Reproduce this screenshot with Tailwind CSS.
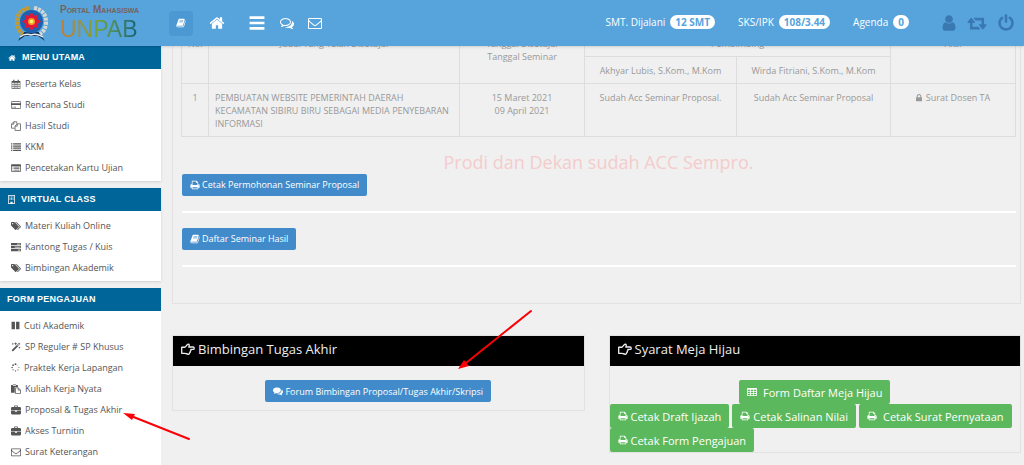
<!DOCTYPE html>
<html lang="id">
<head>
<meta charset="utf-8">
<title>Portal Mahasiswa UNPAB</title>
<script src="https://cdn.jsdelivr.net/npm/@tailwindcss/browser@4"></script>
</head>
<body class="relative h-screen overflow-hidden bg-[#f0f0f0] font-['Open_Sans','Noto_Sans',sans-serif] text-[9px] leading-[13px] text-[#555]">
<svg class="hidden" aria-hidden="true">
  <symbol id="home" viewBox="0 0 1792 1792"><path d="M1472 992v480q0 26-19 45t-45 19h-384v-384h-256v384h-384q-26 0-45-19t-19-45v-480q0-1 .5-3t.5-3l575-474 575 474q1 2 1 6zm223-69l-62 74q-8 9-21 11h-3q-13 0-21-7l-692-577-692 577q-12 8-24 7-13-2-21-11l-62-74q-8-10-7-23.5t11-21.5l719-599q32-26 76-26t76 26l244 204v-195q0-14 9-23t23-9h192q14 0 23 9t9 23v408l219 182q10 8 11 21.5t-7 23.5z"/></symbol>
  <symbol id="bars" viewBox="0 0 14 14"><path d="M.5 1.2h13v2.4H.5zM.5 5.8h13v2.4H.5zM.5 10.4h13v2.4H.5z"/></symbol>
  <symbol id="comments" viewBox="0 0 1792 1792"><path d="M1408 768q0 139-94 257t-256.500 186.500-353.500 68.500q-86 0-176-16-124 88-278 128-36 9-86 16h-3q-11 0-20.500-8t-11.500-21q-1-3-1-6.500t.5-6.500 2-6l2.500-5 3.500-5.500 4-5 4.500-5 4-4.500q5-6 23-25t26-29.500 22.500-29 25-38.500 20.500-44q-124-72-195-177t-71-224q0-139 94-257t256.500-186.500 353.500-68.500 353.500 68.500 256.500 186.500 94 257zm384 256q0 120-71 224.500t-195 176.500q10 24 20.500 44t25 38.500 22.500 29 26 29.500 23 25q1 1 4 4.500t4.500 5 4 5 3.500 5.500l2.500 5 2 6 .5 6.500-1 6.500q-3 14-13 22t-22 7q-50-7-86-16-154-40-278-128-90 16-176 16-271 0-472-132 58 4 88 4 161 0 309-45t264-129q125-92 192-212t67-254q0-77-23-152 129 71 204 178t75 230z"/></symbol>
  <symbol id="comments-o" viewBox="0 0 1792 1792"><path d="M704 384q-153 0-286 52t-211.500 141-78.500 191q0 82 53 158t149 132l97 56-35 84q34-20 62-39l44-31 53 10q78 14 153 14 153 0 286-52t211.500-141 78.500-191-78.500-191-211.500-141-286-52zm0-128q191 0 353.500 68.500t256.500 186.500 94 257-94 257-256.500 186.500-353.500 68.500q-86 0-176-16-124 88-278 128-36 9-86 16h-3q-11 0-20.500-8t-11.500-21q-1-3-1-6.500t.5-6.500 2-6l2.500-5 3.500-5.500 4-5 4.500-5 4-4.500q5-6 23-25t26-29.500 22.500-29 25-38.500 20.500-44q-124-72-195-177t-71-224q0-139 94-257t256.500-186.500 353.500-68.500zm822 1169q10 24 20.500 44t25 38.500 22.500 29 26 29.500 23 25q1 1 4 4.500t4.500 5 4 5 3.500 5.500l2.500 5 2 6 .5 6.500-1 6.500q-3 14-13 22t-22 7q-50-7-86-16-154-40-278-128-90 16-176 16-271 0-472-132 58 4 88 4 161 0 309-45t264-129q125-92 192-212t67-254q0-77-23-152 129 71 204 178t75 230q0 120-71 224.500t-195 176.500z"/></symbol>
  <symbol id="envelope" viewBox="0 0 1792 1792"><path d="M1664 1504v-768q-32 36-69 66-268 206-426 338-51 43-83 67t-86.500 48.500-102.500 24.500h-2q-48 0-102.500-24.500t-86.500-48.500-83-67q-158-132-426-338-37-30-69-66v768q0 13 9.500 22.500t22.500 9.500h1472q13 0 22.500-9.500t9.500-22.500zm0-1051v-24.500l-.5-13-3-12.500-5.500-9-9-7.500-14-2.500h-1472q-13 0-22.500 9.500t-9.500 22.500q0 168 147 284 193 152 401 317 6 5 35 29.500t46 37.500 44.500 31.500 50.500 27.500 43 9h2q20 0 43-9t50.500-27.500 44.500-31.500 46-37.500 35-29.500q208-165 401-317 54-43 100.500-115.500t46.500-131.500zm128-37v1088q0 66-47 113t-113 47h-1472q-66 0-113-47t-47-113v-1088q0-66 47-113t113-47h1472q66 0 113 47t47 113z"/></symbol>
  <symbol id="user" viewBox="128 0 1536 1792"><path d="M1536 1399q0 109-62.500 187t-150.500 78h-854q-88 0-150.500-78t-62.500-187q0-85 8.500-160.500t31.500-152 58.500-131 94-89 134.500-34.500q131 128 313 128t313-128q76 0 134.500 34.500t94 89 58.500 131 31.500 152 8.500 160.500zm-256-887q0 159-112.500 271.500t-271.500 112.500-271.500-112.500-112.500-271.500 112.500-271.500 271.500-112.500 271.500 112.500 112.500 271.500z"/></symbol>
  <symbol id="retweet" viewBox="0 0 1920 1792"><path d="M1280 1504q0 13-9.500 22.500t-22.500 9.500h-960q-8 0-13.500-2t-9-7-5.500-8-3-11.500-1-11.500v-600h-192q-26 0-45-19t-19-45q0-24 15-41l320-384q19-22 49-22t49 22l320 384q15 17 15 41 0 26-19 45t-45 19h-192v384h576q16 0 25 11l160 192q7 10 7 21zm640-416q0 24-15 41l-320 384q-20 23-49 23t-49-23l-320-384q-15-17-15-41 0-26 19-45t45-19h192v-384h-576q-16 0-25-12l-160-192q-7-9-7-20 0-13 9.500-22.500t22.500-9.500h960q8 0 13.500 2t9 7 5.500 8 3 11.500 1 11.500v600h192q26 0 45 19t19 45z"/></symbol>
  <symbol id="power" viewBox="0 0 1792 1792"><path d="M1664 896q0 156-61 298t-164 245-245 164-298 61-298-61-245-164-164-245-61-298q0-182 80.500-343t226.500-270q43-32 95.500-25t83.500 50q32 42 24.500 94.500t-49.500 84.500q-98 74-151.500 181t-53.500 228q0 104 40.500 198.500t109.500 163.500 163.500 109.500 198.500 40.500 198.500-40.500 163.500-109.500 109.500-163.500 40.500-198.500q0-121-53.500-228t-151.500-181q-42-32-49.500-84.500t24.500-94.500q31-43 84-50t95 25q146 109 226.500 270t80.500 343zm-640-768v640q0 52-38 90t-90 38-90-38-38-90v-640q0-52 38-90t90-38 90 38 38 90z"/></symbol>
  <symbol id="book" viewBox="0 0 1792 1792"><path d="M1703 478q40 57 18 129l-275 906q-19 64-76.500 107.500t-122.500 43.500h-923q-77 0-148.500-53.500t-99.500-131.500q-24-67-2-127 0-4 3-27t4-37q1-8-3-21.500t-3-19.500q2-11 8-21t16.500-23.500 16.500-23.500q23-38 45-91.500t30-91.500q3-10 .5-30t-.5-28q3-11 17-28t17-23q21-36 42-92t25-90q1-9-2.500-32t.5-28q4-13 22-30.500t22-22.500q19-26 42.500-84.500t27.500-96.500q1-8-3-25.500t-2-26.500q2-8 9-18t18-23 17-21q8-12 16.500-30.500t15-35 16-36 19.500-32 26.500-23.500 36-11.500 47.500 5.500l-1 3q38-9 51-9h761q74 0 114 56t18 130l-274 906q-36 119-71.500 153.500t-128.500 34.500h-869q-27 0-38 15-11 16-1 43 24 70 144 70h923q29 0 56-15.500t35-41.500l300-987q7-22 5-57 38 15 59 43zm-1064 2q-4 13 2 22.500t20 9.500h608q13 0 25.500-9.500t16.500-22.500l21-64q4-13-2-22.500t-20-9.500h-608q-13 0-25.500 9.500t-16.500 22.500zm-83 256q-4 13 2 22.500t20 9.500h608q13 0 25.500-9.500t16.500-22.500l21-64q4-13-2-22.500t-20-9.500h-608q-13 0-25.500 9.500t-16.500 22.500z"/></symbol>
  <symbol id="print" viewBox="0 0 1792 1792"><path d="M448 1536h896v-256h-896v256zm0-640h896v-384h-160q-40 0-68-28t-28-68v-160h-640v640zm1152 64q0-26-19-45t-45-19-45 19-19 45 19 45 45 19 45-19 19-45zm128 0v416q0 13-9.500 22.500t-22.500 9.500h-224v160q0 40-28 68t-68 28h-960q-40 0-68-28t-28-68v-160h-224q-13 0-22.500-9.500t-9.500-22.500v-416q0-79 56.500-135.500t135.500-56.500h64v-544q0-40 28-68t68-28h672q40 0 88 20t76 48l152 152q28 28 48 76t20 88v256h64q79 0 135.500 56.500t56.500 135.500z"/></symbol>
  <symbol id="lock" viewBox="320 128 1152 1536"><path d="M640 768h512v-192q0-106-75-181t-181-75-181 75-75 181v192zm832 96v576q0 40-28 68t-68 28h-960q-40 0-68-28t-28-68v-576q0-40 28-68t68-28h32v-192q0-184 132-316t316-132 316 132 132 316v192h32q40 0 68 28t28 68z"/></symbol>
  <symbol id="calendar" viewBox="0 0 16 16"><path fill-rule="evenodd" d="M1 3h2.500V1h2v2h5V1h2v2H15v12.500H1zM2 6v2.300h2.500V6zm3.500 0v2.300h2V6zm3 0v2.300h2V6zm3 0v2.300H14V6zM2 9.200v2.300h2.500V9.200zm3.500 0v2.300h2V9.200zm3 0v2.300h2V9.200zm3 0v2.300H14V9.200zM2 12.400v2.100h2.500v-2.100zm3.500 0v2.100h2v-2.100zm3 0v2.100h2v-2.100zm3 0v2.100H14v-2.100z"/></symbol>
  <symbol id="card" viewBox="0 0 16 16"><path fill-rule="evenodd" d="M1.500 2h13A1.500 1.500 0 0 1 16 3.500v9a1.500 1.500 0 0 1-1.500 1.500h-13A1.500 1.500 0 0 1 0 12.500v-9A1.500 1.500 0 0 1 1.500 2zM1 3.300v1.700h14V3.300zM1 8v4.700h14V8zm1 2.800h2v1H2zm3 0h3v1H5z"/></symbol>
  <symbol id="files" viewBox="0 0 16 16"><path fill="none" stroke="currentColor" stroke-width="1.200" stroke-linejoin="round" d="M6 11.500H.8V5L4.500 1.200H9v3M4.500 1.200V5H.8M6.500 8.200 10 4.500h5.200v10.700H6.500zM10 4.500v3.700H6.500"/></symbol>
  <symbol id="list" viewBox="0 0 16 16"><path d="M0 2h2.200v2H0zM3.500 2H16v2H3.500zM0 5.400h2.200v2H0zM3.500 5.400H16v2H3.500zM0 8.800h2.200v2H0zM3.500 8.800H16v2H3.500zM0 12.200h2.200v2H0zM3.500 12.200H16v2H3.500z"/></symbol>
  <symbol id="list-alt" viewBox="0 0 16 16"><path fill-rule="evenodd" d="M1 2h14l1 1v10l-1 1H1l-1-1V3zM1.200 5v7.800h13.600V5zM2.500 6H4v1.300H2.500zM5 6h8.500v1.300H5zM2.500 8.300H4v1.300H2.500zM5 8.300h8.500v1.300H5zM2.500 10.600H4v1.300H2.500zM5 10.600h8.500v1.300H5z"/></symbol>
  <symbol id="building" viewBox="0 0 16 16"><path fill-rule="evenodd" d="M2 0h12v16H2zM3.300 1.300v13.400H6V12h4v2.700h2.700V1.300zM4.500 2.500H6V4H4.500zM7.200 2.500h1.500V4H7.200zM10 2.500h1.500V4H10zM4.500 5H6v1.500H4.500zM7.200 5h1.500v1.500H7.200zM10 5h1.500v1.500H10zM4.500 7.500H6V9H4.500zM7.200 7.500h1.500V9H7.200zM10 7.500h1.500V9H10z"/></symbol>
  <symbol id="tags" viewBox="0 0 1920 1792"><path d="M448 448q0-53-37.500-90.500t-90.500-37.500-90.500 37.500-37.500 90.500 37.500 90.500 90.500 37.500 90.500-37.500 37.500-90.500zm1067 576q0 53-37 90l-491 492q-39 37-91 37-53 0-90-37l-715-716q-38-37-64.500-101t-26.500-117v-416q0-52 38-90t90-38h416q53 0 117 26.500t102 64.500l715 714q37 39 37 91zm384 0q0 53-37 90l-491 492q-39 37-91 37-36 0-59-14t-53-45l470-470q37-37 37-90 0-52-37-91l-715-714q-38-38-102-64.500t-117-26.500h224q53 0 117 26.500t102 64.500l715 714q37 39 37 91z"/></symbol>
  <symbol id="tasks" viewBox="0 0 16 16"><path fill-rule="evenodd" d="M0 1.500h16V5H0zM9.500 2.700v1.100H15V2.700zM0 6.300h16v3.500H0zM6 7.500v1.100h9V7.500zM0 11.100h16v3.500H0zM11 12.300v1.100h4v-1.100z"/></symbol>
  <symbol id="pause" viewBox="0 0 16 16"><path d="M1 1.500h6v13H1zM9 1.500h6v13H9z"/></symbol>
  <symbol id="magic" viewBox="0 0 16 16"><path fill-rule="evenodd" d="M13 1.200 15 3.200 3 15 1 13zM12.900 2.600 10 5.400l.9.900 2.900-2.900zM3 1l.5 1.500L5 3l-1.500.5L3 5l-.5-1.500L1 3l1.500-.5zM7.500 0l.8 2 2 .8-2 .8-.8 2-.8-2-2-.8 2-.8zM13.500 7l.5 1.500 1.500.5-1.500.5-.5 1.500-.5-1.500L11.500 9l1.500-.5z"/></symbol>
  <symbol id="spinner" viewBox="0 0 16 16"><circle cx="8" cy="2" r="1.700"/><circle cx="3.700" cy="3.800" r="1.500"/><circle cx="2" cy="8" r="1.400"/><circle cx="3.700" cy="12.200" r="1.200"/><circle cx="8" cy="14" r="1.100"/><circle cx="12.200" cy="12.200" r="1"/><circle cx="14" cy="8" r=".9"/><circle cx="12.200" cy="3.800" r=".7"/></symbol>
  <symbol id="paste" viewBox="0 0 16 16"><path fill-rule="evenodd" d="M0 1.500h3V.8h5v.7h3v3.200H6V14H0zM3 2v1.200h5V2z"/><path fill="none" stroke="currentColor" stroke-width="1.200" d="M7.200 6h4.300l3.700 3.700v5.600h-8zM11.500 6v3.700h3.700"/></symbol>
  <symbol id="briefcase" viewBox="0 0 16 16"><path fill-rule="evenodd" d="M5 3V1.500L5.800.8h4.400l.8.700V3h3.500L16 4.300v4H0v-4L1.500 3zm1.200 0h3.600V2H6.200zM0 9.300h6.300v1.500h3.400V9.300H16v4.200L14.700 15H1.300L0 13.500z"/></symbol>
  <symbol id="hand" viewBox="0 0 16 16"><path fill="none" stroke="currentColor" stroke-width="1.500" stroke-linejoin="round" d="M.8 6h3.400c1.400 0 2.300-3.400 4-3.400 1.600 0 1.500 1.500.6 3.100h5a1.300 1.300 0 0 1 0 2.700h-2.600c.7 1-.1 1.900-.7 2 .5.900 0 1.700-.8 1.900.2 1.100-.4 1.700-1.500 1.700-2 0-2.600-1.100-4-1.100H.8z"/></symbol>
  <symbol id="table" viewBox="0 0 16 16"><path fill-rule="evenodd" d="M1 1.500h14l1 1v11l-1 1H1l-1-1v-11zM1.200 4.500v2.200h3.600V4.500zm4.800 0v2.200h4V4.500zm5.200 0v2.200h3.600V4.500zM1.200 7.800V10h3.600V7.800zm4.800 0V10h4V7.800zm5.200 0V10h3.600V7.800zM1.200 11.100v2.200h3.600v-2.200zm4.800 0v2.200h4v-2.200zm5.200 0v2.200h3.600v-2.200z"/></symbol>
</svg>

<header class="relative z-10 flex h-[46px] items-center bg-[#57a4dd] text-white shadow-sm">
  <a href="#" class="flex w-[161px] shrink-0 items-center gap-3 pl-[15px]">
    <svg class="h-[35px] w-[33px]" viewBox="0 0 33 35" role="img" aria-label="Lambang UNPAB">
      <path d="M3 35 8 26h16l6 9-7-5H10z" fill="#173a63"/>
      <path d="M5 31q5-4 11-2 6-2 12 2" fill="none" stroke="#e7edf0" stroke-width="1.500"/>
      <path d="M14 2Q2 4 2 16q0 8 6 12" fill="none" stroke="#c79a2a" stroke-width="4" stroke-dasharray="3 1"/>
      <path d="M19 2q12 2 12 14 0 8-6 12" fill="none" stroke="#d5d8d3" stroke-width="4" stroke-dasharray="3 1"/>
      <circle cx="16.500" cy="15.500" r="11.500" fill="#1d62b0"/>
      <path d="m16.500 6 2.500 3.800 4.400-1-1 4.400 3.600 2.300-3.600 2.400 1 4.300-4.400-1-2.500 3.800-2.500-3.800-4.400 1 1-4.300L7 15.500l3.600-2.300-1-4.400 4.400 1z" fill="#e3173a"/>
      <circle cx="16.500" cy="15.500" r="3.500" fill="#f6a21c"/><circle cx="16.500" cy="15.500" r="1.800" fill="#fff37a"/>
    </svg>
    <span class="flex flex-col whitespace-nowrap font-['Liberation_Sans',sans-serif]">
      <span class="text-[10px] leading-[12px] font-bold text-[#75635c] [font-variant:small-caps]">Portal Mahasiswa</span>
      <span class="bg-linear-to-r from-[#c47a35] via-[#6da23c] to-[#0f6173] bg-clip-text text-[23px] leading-[26px] text-transparent">UNPAB</span>
    </span>
  </a>
  <nav class="flex items-center pl-2" aria-label="Pintasan">
    <button type="button" aria-label="Buku" class="flex h-[25px] w-6 items-center justify-center rounded-sm bg-[#4b98d2]"><svg class="size-[10px] fill-current"><use href="#book"/></svg></button>
    <a href="#" aria-label="Beranda" class="ml-4"><svg class="size-4 fill-current"><use href="#home"/></svg></a>
    <a href="#" aria-label="Menu" class="ml-6"><svg class="size-4 fill-current"><use href="#bars"/></svg></a>
    <a href="#" aria-label="Percakapan" class="ml-[15px]"><svg class="size-[14px] fill-current"><use href="#comments-o"/></svg></a>
    <a href="#" aria-label="Pesan" class="ml-[14px]"><svg class="size-[14px] fill-current"><use href="#envelope"/></svg></a>
  </nav>
  <div class="ml-auto flex items-center gap-[23px] pr-8 pb-[2px] text-[10px]">
    <span class="flex items-center gap-[5px]">SMT. Dijalani <b class="rounded-full bg-white px-[5px] leading-[14px] text-[#57a4dd]">12 SMT</b></span>
    <span class="flex items-center gap-[5px]">SKS/IPK <b class="rounded-full bg-white px-[5px] leading-[14px] text-[#57a4dd]">108/3.44</b></span>
    <span class="flex items-center gap-[5px]">Agenda <b class="rounded-full bg-white px-[5px] leading-[14px] text-[#57a4dd]">0</b></span>
  </div>
  <nav class="flex items-center gap-[10px] pr-[9px] text-[#3a78b2]" aria-label="Akun">
    <a href="#" aria-label="Profil"><svg class="h-[18px] w-4 fill-current"><use href="#user"/></svg></a>
    <a href="#" aria-label="Ganti akun"><svg class="h-[18px] w-5 fill-current"><use href="#retweet"/></svg></a>
    <a href="#" aria-label="Keluar"><svg class="size-[18px] fill-current"><use href="#power"/></svg></a>
  </nav>
</header>

<div class="flex">
  <aside class="flex w-[161px] shrink-0 flex-col gap-[7px]">
    <section class="bg-white shadow-sm">
      <h2 class="flex h-[23px] items-center gap-[6px] bg-[#006699] pl-2 font-['Liberation_Sans',sans-serif] text-[9px] font-bold tracking-wide text-white"><svg class="size-2 fill-current"><use href="#home"/></svg>MENU UTAMA</h2>
      <ul class="pt-1 pb-[3px] pl-[11px]">
        <li class="h-[21px]"><a href="#" class="flex h-full items-center gap-1"><svg class="size-[10px] fill-current"><use href="#calendar"/></svg>Peserta Kelas</a></li>
        <li class="h-[21px]"><a href="#" class="flex h-full items-center gap-1"><svg class="size-[10px] fill-current"><use href="#card"/></svg>Rencana Studi</a></li>
        <li class="h-[21px]"><a href="#" class="flex h-full items-center gap-1"><svg class="size-[10px] fill-current"><use href="#files"/></svg>Hasil Studi</a></li>
        <li class="h-[21px]"><a href="#" class="flex h-full items-center gap-1"><svg class="size-[10px] fill-current"><use href="#list"/></svg>KKM</a></li>
        <li class="h-[21px]"><a href="#" class="flex h-full items-center gap-1"><svg class="size-[10px] fill-current"><use href="#list-alt"/></svg>Pencetakan Kartu Ujian</a></li>
      </ul>
    </section>
    <section class="bg-white shadow-sm">
      <h2 class="flex h-[23px] items-center gap-[5px] bg-[#006699] pl-[7px] font-['Liberation_Sans',sans-serif] text-[9px] font-bold tracking-wide text-white"><svg class="size-[9px] fill-current"><use href="#building"/></svg>VIRTUAL CLASS</h2>
      <ul class="pt-1 pb-[3px] pl-[11px]">
        <li class="h-[21px]"><a href="#" class="flex h-full items-center gap-1"><svg class="size-[10px] fill-current"><use href="#tags"/></svg>Materi Kuliah Online</a></li>
        <li class="h-[21px]"><a href="#" class="flex h-full items-center gap-1"><svg class="size-[10px] fill-current"><use href="#tasks"/></svg>Kantong Tugas / Kuis</a></li>
        <li class="h-[21px]"><a href="#" class="flex h-full items-center gap-1"><svg class="size-[10px] fill-current"><use href="#tags"/></svg>Bimbingan Akademik</a></li>
      </ul>
    </section>
    <section class="bg-white">
      <h2 class="flex h-[23px] items-center bg-[#006699] pl-[7px] font-['Liberation_Sans',sans-serif] text-[9px] font-bold tracking-wide text-white">FORM PENGAJUAN</h2>
      <ul class="pt-1 pb-4 pl-[11px]">
        <li class="h-[21px]"><a href="#" class="flex h-full items-center gap-1"><svg class="size-[9px] fill-current"><use href="#pause"/></svg>Cuti Akademik</a></li>
        <li class="h-[21px]"><a href="#" class="flex h-full items-center gap-1"><svg class="size-[10px] fill-current"><use href="#magic"/></svg>SP Reguler # SP Khusus</a></li>
        <li class="h-[21px]"><a href="#" class="flex h-full items-center gap-1"><svg class="size-[9px] fill-current"><use href="#spinner"/></svg>Praktek Kerja Lapangan</a></li>
        <li class="h-[21px]"><a href="#" class="flex h-full items-center gap-1"><svg class="size-[10px] fill-current"><use href="#paste"/></svg>Kuliah Kerja Nyata</a></li>
        <li class="h-[21px]"><a href="#" class="flex h-full items-center gap-1"><svg class="size-[10px] fill-current"><use href="#briefcase"/></svg>Proposal &amp; Tugas Akhir</a></li>
        <li class="h-[21px]"><a href="#" class="flex h-full items-center gap-1"><svg class="size-[10px] fill-current"><use href="#briefcase"/></svg>Akses Turnitin</a></li>
        <li class="h-[21px]"><a href="#" class="flex h-full items-center gap-1"><svg class="size-[10px] fill-current"><use href="#envelope"/></svg>Surat Keterangan</a></li>
      </ul>
    </section>
  </aside>

  <main class="min-w-0 flex-1 pr-[3px] pl-[11px]">
    <section class="-mt-[17px] border border-t-0 border-[#e2e2e2] pr-1 pb-9 pl-2">
      <table class="w-full table-fixed border-collapse text-center text-[#999] [&_td]:border [&_td]:border-[#ddd] [&_td]:px-[6px] [&_td]:pt-[7px] [&_td]:pb-[6px] [&_td]:align-top [&_th]:border [&_th]:border-[#ddd] [&_th]:px-[6px] [&_th]:pt-[7px] [&_th]:pb-[6px] [&_th]:align-top [&_th]:font-normal">
        <colgroup><col class="w-[27px]"><col class="w-[251px]"><col class="w-[125px]"><col class="w-[152px]"><col class="w-[154px]"><col></colgroup>
        <thead>
          <tr><th rowspan="2">No.</th><th rowspan="2">Judul Yang Telah Disetujui</th><th rowspan="2">Tanggal Disetujui<br>Tanggal Seminar</th><th colspan="2">Pembimbing</th><th rowspan="2">Aksi</th></tr>
          <tr><th>Akhyar Lubis, S.Kom., M.Kom</th><th>Wirda Fitriani, S.Kom., M.Kom</th></tr>
        </thead>
        <tbody>
          <tr><td>1</td><td class="text-left">PEMBUATAN WEBSITE PEMERINTAH DAERAH KECAMATAN SIBIRU BIRU SEBAGAI MEDIA PENYEBARAN INFORMASI</td><td>15 Maret 2021<br>09 April 2021</td><td>Sudah Acc Seminar Proposal.</td><td>Sudah Acc Seminar Proposal</td><td><span class="inline-flex items-center gap-1"><svg class="h-2 w-[6px] fill-current"><use href="#lock"/></svg>Surat Dosen TA</span></td></tr>
        </tbody>
      </table>
      <p class="mt-[13px] text-center text-[18px] leading-6 text-[#f4cccc]">Prodi dan Dekan sudah ACC Sempro.</p>
      <div class="pl-px">
        <button type="button" class="flex h-[22px] items-center gap-[2px] rounded-xs bg-[#428bca] px-2 pb-px text-white"><svg class="size-[10px] fill-current"><use href="#print"/></svg>Cetak Permohonan Seminar Proposal</button>
        <hr class="my-[15px] border-t-2 border-white">
        <button type="button" class="flex h-[22px] items-center gap-[2px] rounded-xs bg-[#428bca] px-2 pb-px text-white"><svg class="size-[10px] fill-current"><use href="#book"/></svg>Daftar Seminar Hasil</button>
        <hr class="mt-[15px] border-t-2 border-white">
      </div>
    </section>

    <div class="mt-[31px] grid grid-cols-2 items-start gap-6">
      <section class="border border-[#e2e2e2]">
        <h2 class="flex h-[30px] items-center gap-[3px] bg-black px-2 pb-1 text-[13px] text-[#eee]"><svg class="size-[14px]"><use href="#hand"/></svg>Bimbingan Tugas Akhir</h2>
        <div class="flex justify-center pt-[14px] pb-2">
          <button type="button" class="flex h-[22px] items-center gap-[2px] rounded-xs bg-[#428bca] px-2 text-white"><svg class="size-[10px] fill-current"><use href="#comments"/></svg>Forum Bimbingan Proposal/Tugas Akhir/Skripsi</button>
        </div>
      </section>
      <section class="border border-[#e2e2e2]">
        <h2 class="flex h-[30px] items-center gap-[3px] bg-black px-2 pb-1 text-[13px] text-[#eee]"><svg class="size-[14px]"><use href="#hand"/></svg>Syarat Meja Hijau</h2>
        <div class="pt-[14px] text-[11px] text-white">
          <div class="flex justify-center">
            <button type="button" class="flex h-6 items-center gap-[6px] rounded-xs bg-[#5cb85c] px-2"><svg class="size-[10px] fill-current"><use href="#table"/></svg>Form Daftar Meja Hijau</button>
          </div>
          <div class="flex flex-wrap gap-x-[3px]">
            <button type="button" class="flex h-6 items-center gap-[3px] rounded-xs bg-[#5cb85c] px-2"><svg class="size-[10px] fill-current"><use href="#print"/></svg>Cetak Draft Ijazah</button>
            <button type="button" class="flex h-6 items-center gap-[3px] rounded-xs bg-[#5cb85c] px-2"><svg class="size-[10px] fill-current"><use href="#print"/></svg>Cetak Salinan Nilai</button>
            <button type="button" class="flex h-6 items-center gap-[6px] rounded-xs bg-[#5cb85c] px-2"><svg class="size-[10px] fill-current"><use href="#print"/></svg>Cetak Surat Pernyataan</button>
            <button type="button" class="flex h-6 items-center gap-[3px] rounded-xs bg-[#5cb85c] px-2"><svg class="size-[10px] fill-current"><use href="#print"/></svg>Cetak Form Pengajuan</button>
          </div>
        </div>
      </section>
    </div>
  </main>
</div>

<svg class="pointer-events-none absolute top-[46px] left-0 z-20" width="560" height="419" viewBox="0 46 560 419" fill="#fb0007" stroke="#fb0007" aria-hidden="true">
  <path d="M531 311 466 363M189 439l-58-23" stroke-width="2" stroke-linecap="round"/>
  <path stroke="none" d="m458 369 6-9 5 6zM123 413l12 1-3 6z"/>
</svg>
</body>
</html>
